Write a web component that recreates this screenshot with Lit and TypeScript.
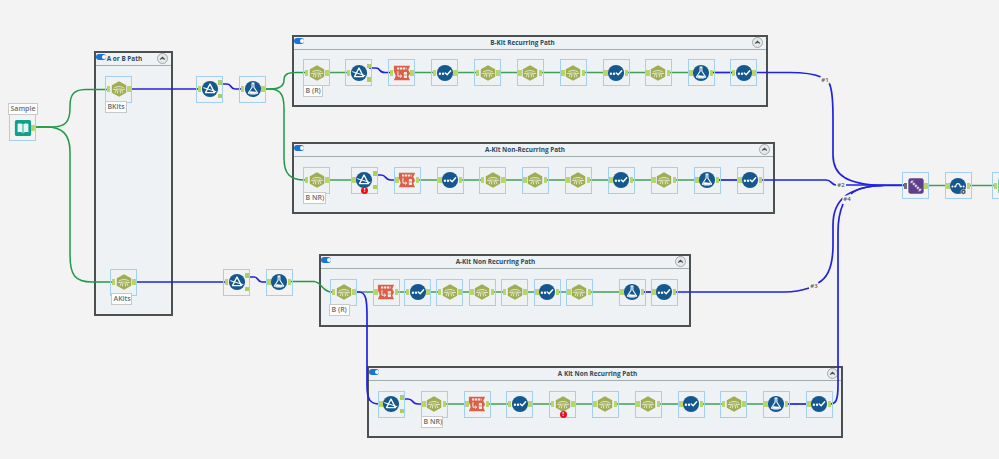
import { LitElement, html, css, svg } from "lit";
import { customElement } from "lit/decorators.js";
import { styleMap } from "lit/directives/style-map.js";

type Kind = "book" | "formula" | "filter" | "flask" | "select" | "text" | "join" | "cloud" | "teal";
interface Node { k: Kind; x: number; y: number; err?: boolean; label?: string; lw?: number; lx?: number; ly?: number }

const P = "#14588f";
const circle = svg`<circle cx="10" cy="10" r="9" fill="${P}"/>`;

const icons: Record<Kind, unknown> = {
  book: svg`<path d="M1 3C1 1.800 1.800 1 3 1H17C18.200 1 19 1.800 19 3V17C19 18.200 18.200 19 17 19H3C1.800 19 1 18.200 1 17Z" fill="#12a08e"/>
    <path d="M4 5.500C6.500 4.600 8.800 5 10 6.500C11.200 5 13.500 4.600 16 5.500V14.800C13.500 14 11.500 14.500 10 16C8.500 14.500 6.500 14 4 14.800Z" fill="#e4f6f2"/>
    <path d="M10 6.500V16" stroke="#12a08e" stroke-width="1"/>`,
  formula: svg`<path d="M10 1.500L18 5.800V14.200L10 18.500L2 14.200V5.800Z" fill="#a0ad55"/>
    <path d="M5 8.500C7 6.800 13 6.800 15 8.500M3.800 10.500H6M14 10.500H16.200M7.500 9.800L5.800 14M9 9.800L8.300 14.500M11 9.800L11.700 14.500M12.500 9.800L14.200 14" fill="none" stroke="#f2f5e2" stroke-width="0.900" stroke-linecap="round"/>`,
  filter: svg`${circle}<path d="M10 4.500L15 14H5Z" fill="none" stroke="#fff" stroke-width="1.500" stroke-linejoin="round"/>
    <path d="M2.500 8.500L17 13" stroke="#fff" stroke-width="1.100"/>`,
  flask: svg`${circle}<path d="M8.500 3.500H11.500M9 3.500V8L4.800 14.500C5 16 15 16 15.200 14.500L11 8V3.500" fill="none" stroke="#fff" stroke-width="1.200" stroke-linejoin="round"/>
    <path d="M6.500 13C8.500 11.800 11.500 14 13.500 12.800L14.500 14.800C12 15.600 8 15.600 5.500 14.800Z" fill="#fff"/>`,
  select: svg`${circle}<circle cx="4.300" cy="10.800" r="1.300" fill="#fff"/><circle cx="7.800" cy="10.800" r="1.300" fill="#fff"/>
    <path d="M10.300 10L12.400 12L16.300 7.500" fill="none" stroke="#fff" stroke-width="1.500" stroke-linecap="round" stroke-linejoin="round"/>`,
  text: svg`<path d="M1 2H19L17 6.500L19 10.500L17 14L19 18H1L3 13L1 8Z" fill="#d9604a"/>
    <path d="M4.500 5H15" stroke="#fbeee9" stroke-width="2.200" stroke-dasharray="2.400 0.800"/>
    <path d="M5.500 8V13.500H9.500M8 12L9.800 13.500L8 15" fill="none" stroke="#fbeee9" stroke-width="1.100"/>
    <rect x="12" y="9" width="3.500" height="6.500" fill="#fbeee9"/><path d="M12 12.200H15.500" stroke="#d9604a" stroke-width="0.800"/>`,
  join: svg`<rect x="1.500" y="1.500" width="17" height="17" rx="2.500" fill="#5f3f8a"/>
    <path d="M4.500 4.500L15.500 15.500" stroke="#d9d2e6" stroke-width="2.600" stroke-dasharray="2.300 0.900"/>
    <path d="M3.800 7L7 3.800M13 16.200L16.200 13" stroke="#d9d2e6" stroke-width="0.900"/>`,
  cloud: svg`${circle}<circle cx="3.800" cy="10.500" r="1.100" fill="#fff"/><circle cx="6.800" cy="10.500" r="1.100" fill="#fff"/>
    <circle cx="13.200" cy="10.500" r="1.100" fill="#fff"/><circle cx="16.200" cy="10.500" r="1.100" fill="#fff"/>
    <path d="M8 10.500A2.200 2.200 0 1 1 12 10.500" fill="none" stroke="#fff" stroke-width="1.300"/>
    <circle cx="16" cy="16.500" r="2.800" fill="#4a4a4a" stroke="#f3f3f3" stroke-width="0.600"/><circle cx="16" cy="16.500" r="1" fill="#eee"/>`,
  teal: svg`<rect x="1.500" y="1.500" width="17" height="17" rx="2" fill="#3fb795"/>`,
};

const row = (y: number, xs: number[], kinds: Kind[]): Node[] => xs.map((x, i) => ({ x, y, k: kinds[i] }));
const F: Kind = "formula", S: Kind = "select", T: Kind = "text", B: Kind = "filter", L: Kind = "flask";

const nodes: Node[] = [
  { k: "book", x: 22.5, y: 127.5, label: "Sample", lx: 8, ly: 103, lw: 30 },
  { k: F, x: 118.5, y: 89, label: "BKits", lx: 105, ly: 101, lw: 22 },
  { k: F, x: 123.5, y: 282, label: "AKits", lx: 111, ly: 293, lw: 21 },
  { k: B, x: 209.500, y: 89 }, { k: L, x: 252.500, y: 89 },
  { k: B, x: 236.500, y: 282 }, { k: L, x: 279, y: 282 },
  ...row(72.5, [316.5, 358.5, 401.5, 444.5, 487.5, 530, 573, 616, 658, 701, 743.5], [F, B, T, S, F, F, F, S, F, L, S]),
  ...row(180, [316.5, 364, 407, 450, 492.5, 535, 578, 621, 664, 707, 750], [F, B, T, S, F, F, F, S, F, L, S]),
  ...row(292, [343.5, 386, 417.5, 449.5, 482, 514.5, 547, 579, 632, 664], [F, T, S, F, F, F, S, F, L, S]),
  ...row(404, [391, 434, 477, 519.5, 562.5, 605, 648, 691, 733.5, 776, 819], [B, F, T, S, F, F, F, S, F, L, S]),
  { k: "join", x: 915.5, y: 185.5 }, { k: "cloud", x: 958, y: 185.5 }, { k: "teal", x: 1005.5, y: 185.5 },
];
const find = (x: number, y: number) => nodes.find((n) => n.x === x && n.y === y)!;
Object.assign(find(316.5, 72.5), { label: "B (R)", lx: 303, ly: 85, lw: 20 });
Object.assign(find(316.5, 180), { label: "B NR)", lx: 303, ly: 192, lw: 23 });
Object.assign(find(343.5, 292), { label: "B (R)", lx: 329, ly: 304, lw: 21 });
Object.assign(find(434, 404), { label: "B NR)", lx: 421, ly: 416, lw: 22 });
find(364, 180).err = true;
find(562.5, 404).err = true;

const GREEN = "#3f9f58";
const DARK = "#1f9a48";
const BLUE = "#2222e0";

const chain = (y: number, xs: number[]) => {
  const out: string[] = [];
  for (let i = 0; i < xs.length - 1; i++) out.push(`M${xs[i] + 11} ${y}H${xs[i + 1] - 11}`);
  return out;
};
const greens = [
  ...chain(72.5, [316.5, 358.5]), ...chain(72.5, [401.5, 444.5, 487.5, 530, 573, 616, 658, 701]),
  ...chain(180, [316.5, 364]), ...chain(180, [407, 450, 492.5, 535, 578, 621, 664, 707]),
  ...chain(292, [343.5, 386, 417.5, 449.5, 482, 514.5, 547, 579, 632]),
  ...chain(404, [434, 477, 519.5, 562.5, 605, 648, 691, 733.5, 776]),
  "M926 185.500H948", "M969 185.500H995",
];
const darkGreens = [
  "M33 127H52C65 127 70 122 70 108V106C70 94 74 90 85 89.500H107.500",
  "M33 127H46C63 127 70 135 70 152V255C70 275 75 282 92 282H112",
  "M263 89H270C280 89 284 86 284 80C284 74 288 72.500 296 72.500H305",
  "M263 89H270C281 89 284 96 284 108V158C284 174 290 180 305 180",
  "M290 281.500H314C322 282 322 292 332 292",
];
const blues = [
  "M130 89H198", "M135 282H225",
  ...chain(72.5, [701, 743.5]), ...chain(180, [707, 750]), ...chain(292, [632, 664]), ...chain(404, [776, 819]),
  "M220 84H227C232 84 230 89 235 89H241",
  "M247 277H254C259 277 257 282 262 282H268",
  "M369 68H376C381 68 378 72.500 385 72.500H390",
  "M375 175H381C387 175 384 180 391 180H396",
  "M402 399H408C414 399 411 404 418 404H423",
  "M354 292H359C366 292 367 300 367 316V385C367 400 370 404 380 404",
  "M755 72.500H790C805 72.500 814 74 821 77",
  "M829 83C832 88 833 98 833 118V155C833 176 848 184 880 185.500H904",
  "M761 180H826C832 180 831 185 836 185",
  "M846 185H904",
  "M675 292H785C795 292 803 290 809 288",
  "M818 283C828 278 833 265 833 245V225C833 200 848 187 882 185.500",
  "M830 404C836 404 838 400 838 385V232C838 220 840 211 843 204",
  "M851 194C856 189 866 186 884 185.500",
];

const groups = [
  { t: "A or B Path", x: 94, y: 51, w: 79, h: 265, off: 14 },
  { t: "B-Kit Recurring Path", x: 292, y: 35, w: 476, h: 72, off: 11 },
  { t: "A-Kit Non-Recurring Path", x: 292, y: 142, w: 483, h: 72, off: 13 },
  { t: "A-Kit Non Recurring Path", x: 319, y: 254, w: 372, h: 73, off: 15 },
  { t: "A Kit Non Recurring Path", x: 367, y: 366, w: 476, h: 72, off: 11 },
];
const tags = [
  { t: "#1", x: 825, y: 79.5 }, { t: "#2", x: 841, y: 185 }, { t: "#3", x: 814, y: 286 }, { t: "#4", x: 847, y: 199 },
];

@customElement("app-root")
export class AppRoot extends LitElement {
  static styles = css`
    :host { display: block; position: relative; width: 999px; height: 459px; overflow: hidden; background: #f3f3f3; font-family: "Open Sans", sans-serif; }
    .group { position: absolute; box-sizing: border-box; border: 2px solid #4b5050; background: #eef2f4; display: flex; flex-direction: column; }
    .head { height: 11px; border-bottom: 1.500px solid #a0adad; display: flex; align-items: center; padding: 0 3px 1px 0; }
    .toggle { width: 10px; height: 5.500px; border-radius: 3px; background: #1a73d8; position: relative; flex: none; margin-top: -3px; }
    .toggle::after { content: ""; position: absolute; right: 0.500px; top: 0.750px; width: 4px; height: 4px; border-radius: 50%; background: #fff; }
    .title { flex: 1; text-align: center; font-size: 6.400px; font-weight: 700; color: #2e4a58; white-space: nowrap; line-height: 10px; }
    .btn { width: 11px; height: 11px; flex: none; }
    .wires { position: absolute; left: 0; top: 0; width: 999px; height: 459px; fill: none; }
    .node { position: absolute; box-sizing: border-box; width: 27px; height: 27px; border: 1px solid #a3cff0; }
    .icon { position: absolute; left: 3.500px; top: 3.500px; width: 18px; height: 18px; }
    .anchor { position: absolute; width: 3.500px; height: 6px; background: #b6d66a; top: 9.500px; }
    .in { left: 0.500px; }
    .out { right: 0.500px; }
    .anchor.top { top: 3.500px; right: 0; width: 4px; height: 4.500px; background: #a9cf5e; }
    .anchor.bot { top: 17px; right: 0; width: 4px; height: 4.500px; background: #a9cf5e; }
    .anchor.grey { background: #6b7078; }
    .err { position: absolute; left: 9.500px; top: 19px; width: 7px; height: 7px; border-radius: 50%; background: #e8101a; color: #fff; font-size: 6px; line-height: 7px; font-weight: 700; text-align: center; }
    .label { position: absolute; box-sizing: border-box; height: 12px; border: 1px solid #c9c9c9; background: #fff; color: #6a6a6a; font-size: 7px; font-weight: 600; line-height: 10px; padding-left: 1.500px; white-space: nowrap; }
    .tag { position: absolute; transform: translate(-50%, -50%); font-size: 6px; line-height: 7px; font-weight: 600; color: #555; background: #f3f3f3; padding: 0 1px; }
  `;

  private renderNode(n: Node) {
    const pos = styleMap({ left: `${n.x - 13.5}px`, top: `${n.y - 13.5}px` });
    const noIn = n.k === "book";
    return html`<div class="node" style=${pos}>
      <svg class="icon" viewBox="0 0 20 20">${icons[n.k]}</svg>
      ${noIn ? "" : html`<span class="anchor in ${n.k === "join" ? "grey" : ""}"></span>`}
      ${n.k === "filter"
        ? html`<span class="anchor top"></span><span class="anchor bot"></span>`
        : html`<span class="anchor out"></span>`}
      ${n.err ? html`<span class="err">!</span>` : ""}
    </div>`;
  }

  render() {
    return html`
      ${groups.map((g) => html`
        <section class="group" style=${styleMap({ left: `${g.x}px`, top: `${g.y}px`, width: `${g.w}px`, height: `${g.h}px` })}>
          <div class="head">
            <span class="toggle"></span>
            <span class="title" style=${styleMap({ paddingRight: `${g.off}px` })}>${g.t}</span>
            <svg class="btn" viewBox="0 0 11 11">
              <circle cx="5.500" cy="5.500" r="5" fill="#e6e9ea" stroke="#a3a8aa" stroke-width="1"/>
              <path d="M3.300 6.500L5.500 4.300L7.700 6.500" fill="none" stroke="#4b5050" stroke-width="1.200"/>
            </svg>
          </div>
        </section>`)}
      <svg class="wires" viewBox="0 0 999 459">
        ${greens.map((d) => svg`<path d=${d} stroke=${GREEN} stroke-width="1.500"/>`)}
        ${darkGreens.map((d) => svg`<path d=${d} stroke=${DARK} stroke-width="1.500"/>`)}
        ${blues.map((d) => svg`<path d=${d} stroke=${BLUE} stroke-width="1.700"/>`)}
      </svg>
      ${tags.map((t) => html`<span class="tag" style=${styleMap({ left: `${t.x}px`, top: `${t.y}px` })}>${t.t}</span>`)}
      ${nodes.map((n) => this.renderNode(n))}
      ${nodes.filter((n) => n.label).map((n) => html`<span class="label" style=${styleMap({ left: `${n.lx}px`, top: `${n.ly}px`, width: `${n.lw}px` })}>${n.label}</span>`)}
    `;
  }
}
